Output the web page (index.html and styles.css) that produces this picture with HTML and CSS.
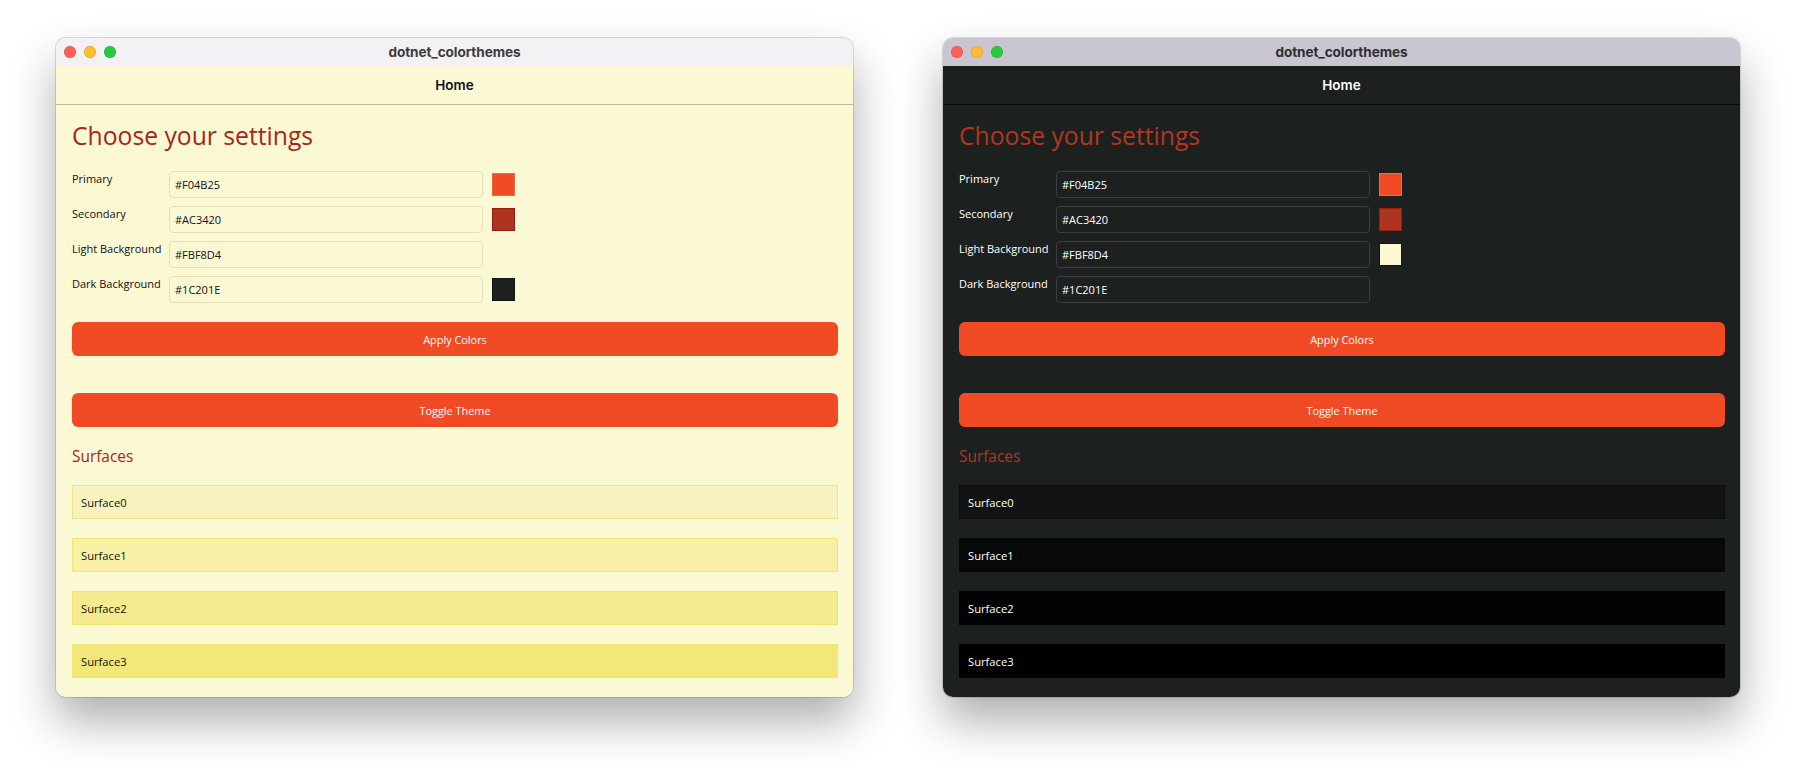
FILE: index.html
```html
<!DOCTYPE html>
<html lang="en">
<head>
<meta charset="utf-8">
<title>dotnet_colorthemes</title>
<link rel="stylesheet" href="styles.css">
</head>
<body>
<div class="desk">
  <section class="window light">
    <header class="titlebar">
      <div class="lights"><span class="dot red"></span><span class="dot yellow"></span><span class="dot green"></span></div>
      <div class="title">dotnet_colorthemes</div>
      <div></div>
    </header>
    <nav class="navbar">Home</nav>
    <main class="content">
      <h1 class="heading">Choose your settings</h1>
      <div class="form">
        <label class="label">Primary</label>
        <div class="input">#F04B25</div>
        <span class="swatch sw-primary"></span>
        <label class="label">Secondary</label>
        <div class="input">#AC3420</div>
        <span class="swatch sw-secondary"></span>
        <label class="label">Light Background</label>
        <div class="input">#FBF8D4</div>
        <span class="swatch sw-lightbg"></span>
        <label class="label">Dark Background</label>
        <div class="input">#1C201E</div>
        <span class="swatch sw-darkbg"></span>
      </div>
      <button class="btn apply">Apply Colors</button>
      <button class="btn toggle">Toggle Theme</button>
      <h2 class="subheading">Surfaces</h2>
      <div class="surfaces">
        <div class="surface s0">Surface0</div>
        <div class="surface s1">Surface1</div>
        <div class="surface s2">Surface2</div>
        <div class="surface s3">Surface3</div>
      </div>
    </main>
  </section>

  <section class="window dark">
    <header class="titlebar">
      <div class="lights"><span class="dot red"></span><span class="dot yellow"></span><span class="dot green"></span></div>
      <div class="title">dotnet_colorthemes</div>
      <div></div>
    </header>
    <nav class="navbar">Home</nav>
    <main class="content">
      <h1 class="heading">Choose your settings</h1>
      <div class="form">
        <label class="label">Primary</label>
        <div class="input">#F04B25</div>
        <span class="swatch sw-primary"></span>
        <label class="label">Secondary</label>
        <div class="input">#AC3420</div>
        <span class="swatch sw-secondary"></span>
        <label class="label">Light Background</label>
        <div class="input">#FBF8D4</div>
        <span class="swatch sw-lightbg"></span>
        <label class="label">Dark Background</label>
        <div class="input">#1C201E</div>
        <span class="swatch sw-darkbg"></span>
      </div>
      <button class="btn apply">Apply Colors</button>
      <button class="btn toggle">Toggle Theme</button>
      <h2 class="subheading">Surfaces</h2>
      <div class="surfaces">
        <div class="surface s0">Surface0</div>
        <div class="surface s1">Surface1</div>
        <div class="surface s2">Surface2</div>
        <div class="surface s3">Surface3</div>
      </div>
    </main>
  </section>
</div>
</body>
</html>
```
FILE: styles.css
```css
* { box-sizing: border-box; }
html, body {
  margin: 0;
  padding: 0;
  background: #ffffff;
  width: 1796px;
  height: 771px;
  overflow: hidden;
}
.desk {
  display: flex;
  gap: 90px;
  padding: 38px 0 0 56px;
  align-items: flex-start;
}
.window {
  width: 797px;
  height: 659px;
  border-radius: 10px;
  overflow: hidden;
  display: flex;
  flex-direction: column;
  box-shadow: 0 24px 46px rgba(0, 0, 0, 0.32), 0 0 0 1px rgba(0, 0, 0, 0.13);
  font-family: "Open Sans", "Noto Sans", sans-serif;
}
.titlebar {
  height: 28px;
  flex: none;
  display: grid;
  grid-template-columns: 1fr auto 1fr;
  align-items: center;
  font-family: Inter, "Liberation Sans", sans-serif;
}
.lights {
  display: flex;
  gap: 8px;
  padding-left: 8px;
}
.dot {
  width: 12px;
  height: 12px;
  border-radius: 50%;
  display: block;
  box-shadow: inset 0 0 0 0.5px rgba(0, 0, 0, 0.18);
}
.red { background: #ff5f57; }
.yellow { background: #febc2e; }
.green { background: #28c840; }
.title {
  font-size: 13.6px;
  font-weight: 700;
  color: #3b3b3d;
  letter-spacing: -0.1px;
}
.navbar {
  height: 39px;
  flex: none;
  display: flex;
  align-items: center;
  justify-content: center;
  font-family: Inter, "Liberation Sans", sans-serif;
  font-size: 13.5px;
  font-weight: 600;
  border-bottom: 1px solid;
  padding-bottom: 1px;
}
.content {
  flex: 1;
  padding: 13px 15px 19px 16px;
  display: flex;
  flex-direction: column;
}
.heading {
  margin: 0;
  font-size: 24.7px;
  font-weight: 400;
  line-height: 35px;
  color: #AC3420;
}
.form {
  margin-top: 18px;
  display: grid;
  grid-template-columns: 88px 314px 23px;
  grid-auto-rows: 27px;
  column-gap: 9px;
  row-gap: 8px;
  align-items: start;
}
.label {
  font-size: 11px;
  line-height: 16px;
  white-space: nowrap;
}
.input {
  height: 27px;
  border: 1px solid;
  border-radius: 4px;
  padding: 0 5px;
  font-size: 11px;
  display: flex;
  align-items: center;
}
.swatch {
  width: 23px;
  height: 23px;
  margin-top: 2px;
  display: block;
  border: 1px solid rgba(0, 0, 0, 0.12);
}
.sw-primary { background: #F04B25; border-color: #f36a48; }
.sw-secondary { background: #AC3420; border-color: #9b1d10; }
.sw-lightbg { background: #FBF8D4; border-color: #111413; }
.sw-darkbg { background: #1C201E; border-color: #111413; }
.btn {
  display: block;
  width: 100%;
  height: 34px;
  border: none;
  border-radius: 6px;
  background: #F04B25;
  color: #ffffff;
  font-family: "Open Sans", "Noto Sans", sans-serif;
  font-size: 10.9px;
  padding: 0;
}
.apply { margin-top: 19px; }
.toggle { margin-top: 37px; }
.subheading {
  margin: 18px 0 0 0;
  font-size: 15.4px;
  font-weight: 400;
  line-height: 23px;
  color: #AC3420;
}
.surfaces {
  margin-top: 17px;
  display: flex;
  flex-direction: column;
  gap: 19px;
}
.surface {
  height: 34px;
  border: 1px solid;
  padding: 0 8px;
  display: flex;
  align-items: center;
  font-size: 11.2px;
}

/* Light theme */
.light .titlebar { background: #f3f1f4; }
.light .navbar { background: #FBF8D4; color: #111111; border-color: #bcb89d; }
.light .content { background: #FBF8D4; color: #111111; }
.light .heading, .light .subheading { color: #A82618; }
.light .input { border-color: #e6dfb6; background: #FBF8D4; }
.light .sw-lightbg { border-color: transparent; }
.light .s0 { background: #f8f3be; border-color: #f1e482; }
.light .s1 { background: #f7f0a5; border-color: #f1e47a; }
.light .s2 { background: #f4eb8e; border-color: #f1e370; }
.light .s3 { background: #f2e779; border-color: #f2e677; }

/* Dark theme */
.dark .titlebar { background: #c9c6d1; }
.dark .title { color: #2e2e31; }
.dark .navbar { background: #1C201E; color: #ffffff; border-color: #0b0d0c; }
.dark .content { background: #1C201E; color: #ffffff; }
.dark .heading, .dark .subheading { color: #B3361F; }
.dark .input { border-color: #3a3e3c; background: #1C201E; }
.dark .sw-darkbg { border-color: transparent; }
.dark .s0 { background: #121413; border-color: #0a0b0b; }
.dark .s1 { background: #070908; border-color: #070908; }
.dark .s2 { background: #020202; border-color: #020202; }
.dark .s3 { background: #000000; border-color: #000000; }
```
